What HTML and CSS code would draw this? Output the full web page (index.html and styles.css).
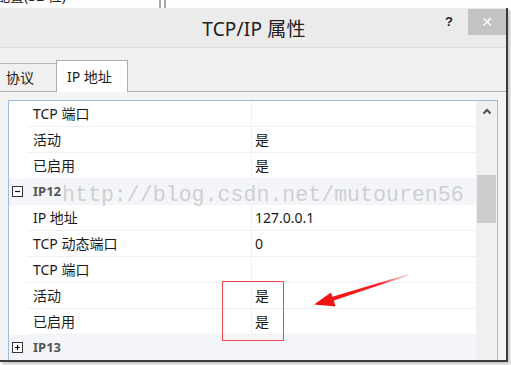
FILE: index.html
```html
<!DOCTYPE html>
<html lang="zh">
<head>
<meta charset="utf-8">
<title>TCP/IP 属性</title>
<link rel="stylesheet" href="styles.css">
</head>
<body>
<div class="top">
  <div class="top-left"><span class="top-text">配置(32 位)</span></div>
  <div class="top-sep"></div>
  <div class="top-right"></div>
</div>
<div class="window">
  <div class="titlebar">
    <div class="title">TCP/IP 属性</div>
    <div class="buttons">
      <span class="help">?</span>
      <span class="close">✕</span>
    </div>
  </div>
  <div class="tabs">
    <div class="tab">协议</div>
    <div class="tab active">IP 地址</div>
  </div>
  <div class="panel">
    <div class="list">
      <div class="rows">
        <div class="row"><span class="gut"></span><span class="name">TCP 端口</span><span class="val"></span></div>
        <div class="row"><span class="gut"></span><span class="name">活动</span><span class="val">是</span></div>
        <div class="row"><span class="gut"></span><span class="name">已启用</span><span class="val">是</span></div>
        <div class="row group"><span class="gut"><svg class="exp" width="11" height="11" viewBox="0 0 11 11"><rect x="0.5" y="0.5" width="10" height="10" fill="#fff" stroke="#333"/><path d="M3 5.5h5" stroke="#111" stroke-width="1.2"/></svg></span><span class="name">IP12</span><span class="val"></span></div>
        <div class="row"><span class="gut"></span><span class="name">IP 地址</span><span class="val">127.0.0.1</span></div>
        <div class="row"><span class="gut"></span><span class="name">TCP 动态端口</span><span class="val">0</span></div>
        <div class="row"><span class="gut"></span><span class="name">TCP 端口</span><span class="val"></span></div>
        <div class="row"><span class="gut"></span><span class="name">活动</span><span class="val">是</span></div>
        <div class="row"><span class="gut"></span><span class="name">已启用</span><span class="val">是</span></div>
        <div class="row group"><span class="gut"><svg class="exp" width="11" height="11" viewBox="0 0 11 11"><rect x="0.5" y="0.5" width="10" height="10" fill="#fff" stroke="#333"/><path d="M3 5.5h5M5.5 3v5" stroke="#111" stroke-width="1.2"/></svg></span><span class="name">IP13</span><span class="val"></span></div>
      </div>
      <div class="scrollbar">
        <div class="sb-up"><svg width="10" height="7" viewBox="0 0 10 7"><path d="M1.5 5.5L5 2l3.5 3.5" fill="none" stroke="#505050" stroke-width="2"/></svg></div>
        <div class="sb-gap"></div>
        <div class="sb-thumb"></div>
      </div>
    </div>
  </div>
  <div class="watermark">http://blog.csdn.net/mutouren56</div>
  <div class="redbox"></div>
  <svg class="arrow" width="508" height="360" viewBox="0 8 508 360">
    <defs>
      <linearGradient id="ag" x1="314" y1="305" x2="408" y2="275" gradientUnits="userSpaceOnUse">
        <stop offset="0" stop-color="#f01010"/>
        <stop offset="0.7" stop-color="#f52020"/>
        <stop offset="1" stop-color="#ff8080" stop-opacity="0.4"/>
      </linearGradient>
    </defs>
    <polygon points="314,304.5 331,292.5 332.4,296.8 408,274.3 408.3,275.6 333.8,300.6 335.5,306.5" fill="url(#ag)"/>
  </svg>
</div>
</body>
</html>
```
FILE: styles.css
```css
html, body {
  margin: 0;
  padding: 0;
}
body {
  width: 511px;
  height: 365px;
  overflow: hidden;
  background: #ffffff;
  font-family: "Noto Sans", "Noto Sans CJK SC", sans-serif;
  color: #1a1a1a;
}
.top {
  height: 8px;
  display: flex;
  overflow: hidden;
  background: #fff;
}
.top-left {
  width: 159px;
  overflow: hidden;
}
.top-text {
  display: block;
  margin-top: -13px;
  margin-left: -4px;
  font-size: 14px;
  line-height: 18px;
  white-space: nowrap;
  color: #222;
}
.top-sep {
  width: 2px;
  margin-right: 3px;
  background: #a9a9a9;
  box-shadow: 5px 0 0 #a9a9a9;
}
.top-right {
  flex: 1;
}

.window {
  position: relative;
  width: 506px;
  height: 352px;
  border-right: 2px solid #3c3c3c;
  border-bottom: 2px solid #3c3c3c;
  box-shadow: 2px 2px 3px rgba(0, 0, 0, 0.25);
  overflow: hidden;
  background: #f0f0f0;
}
.titlebar {
  height: 39px;
  display: grid;
  grid-template-columns: 1fr;
  background: #ebebeb;
  border-bottom: 1px solid #dadada;
}
.title, .buttons {
  grid-area: 1 / 1;
}
.title {
  justify-self: center;
  align-self: center;
  font-size: 19px;
  letter-spacing: 0.2px;
  color: #202020;
  margin-left: 2px;
}
.buttons {
  justify-self: end;
  display: flex;
  align-items: flex-start;
}
.help {
  margin-top: 6px;
  margin-right: 15px;
  font-weight: bold;
  font-size: 13px;
  color: #222;
  font-family: "Liberation Sans", sans-serif;
}
.close {
  margin-top: 1px;
  width: 38px;
  height: 26px;
  background: #c3c3c3;
  color: #ffffff;
  font-size: 14px;
  display: flex;
  align-items: center;
  justify-content: center;
  font-family: "DejaVu Sans", sans-serif;
}

.tabs {
  height: 43px;
  display: flex;
  align-items: flex-end;
  border-bottom: 1px solid #adadad;
  background: #f0f0f0;
}
.tab {
  font-size: 14px;
  color: #1a1a1a;
  border: 1px solid #b4b4b4;
  border-bottom: none;
  box-sizing: border-box;
}
.tab:first-child {
  width: 59px;
  height: 28px;
  margin-left: -2px;
  padding-left: 7px;
  line-height: 27px;
  background: #f0f0f0;
}
.tab.active {
  width: 72px;
  height: 32px;
  margin-bottom: -1px;
  margin-left: -1px;
  padding-left: 10px;
  line-height: 31px;
  background: #ffffff;
  border-color: #adadad;
  position: relative;
}

.panel {
  padding: 8px 8px 0 8px;
  background: #f3f3f3;
}
.list {
  display: flex;
  height: 260px;
  border: 1px solid #94c0e8;
  border-bottom: none;
  background: #fff;
  box-sizing: border-box;
  width: 490px;
}
.rows {
  flex: 1;
  display: flex;
  flex-direction: column;
}
.row {
  height: 26px;
  flex: none;
  display: grid;
  grid-template-columns: 18px 224px 1fr;
  font-size: 14px;
  line-height: 25px;
}
.row .name, .row .val {
  border-bottom: 1px solid #eef2f8;
}
.row .name {
  padding-left: 6px;
  white-space: nowrap;
}
.row .val {
  border-left: 1px solid #eef2f8;
  padding-left: 3px;
}
.row.group {
  background: #f3f5f9;
}
.row.group .name {
  font-weight: bold;
  font-size: 13px;
  color: #555;
  border-bottom-color: #f3f5f9;
}
.row.group .val {
  border-left-color: #f3f5f9;
  border-bottom-color: #f3f5f9;
}
.gut {
  display: block;
}
.exp {
  display: block;
  margin: 7px 0 0 3px;
}

.scrollbar {
  width: 21px;
  background: #f0f0f0;
  display: flex;
  flex-direction: column;
  align-items: center;
}
.sb-up {
  height: 21px;
  display: flex;
  align-items: center;
  justify-content: center;
}
.sb-gap {
  height: 53px;
}
.sb-thumb {
  width: 19px;
  height: 48px;
  background: #cdcdcd;
}

.watermark {
  position: absolute;
  left: 62px;
  top: 176px;
  font-family: "Liberation Mono", monospace;
  font-size: 21.6px;
  line-height: 22px;
  color: rgba(170, 170, 170, 0.5);
  white-space: nowrap;
  pointer-events: none;
}
.redbox {
  position: absolute;
  left: 222px;
  top: 273px;
  width: 60px;
  height: 58px;
  border: 1.5px solid #ee4a4a;
}
.arrow {
  position: absolute;
  left: 0;
  top: 0;
}
```
